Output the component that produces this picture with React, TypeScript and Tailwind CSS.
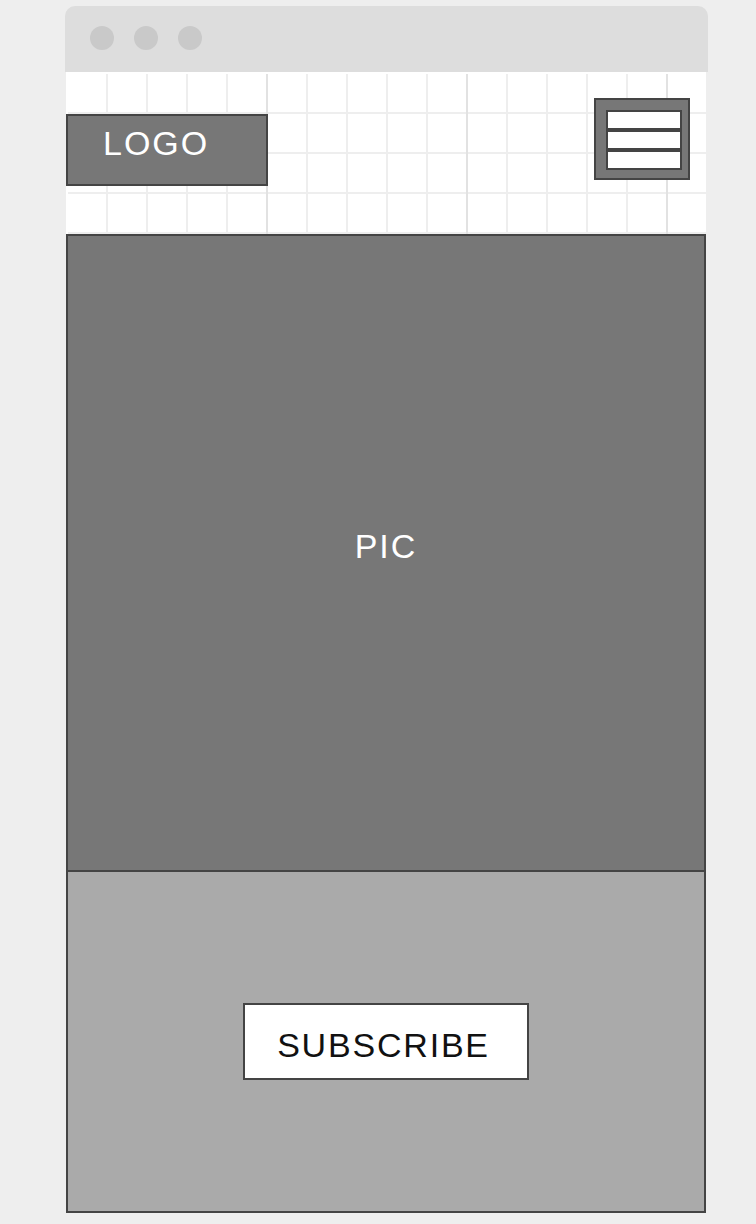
import React from 'react'

const App = () => {
  const dots = [1, 2, 3]
  return (
    <div className="min-h-screen bg-[#eeeeee] pt-[6px] pl-[65px] font-['Liberation_Sans',Arial,sans-serif]">
      <div className="w-[643px]">
        {/* window bar */}
        <div className="h-[66px] rounded-t-[10px] bg-[#dddddd] flex items-start pt-[20px] pl-[25px] gap-[20px]">
          {dots.map((d) => (
            <div key={d} className="w-[24px] h-[24px] rounded-full bg-[#c9c9c9]" />
          ))}
        </div>

        <div className="ml-[1px] w-[640px]">
          {/* header with grid */}
          <div className="h-[162px] border-t-2 border-l-2 border-white bg-white bg-clip-padding [background-image:linear-gradient(to_right,transparent_198px,#e2e2e2_198px),linear-gradient(to_right,transparent_38px,#eeeeee_38px),linear-gradient(to_bottom,transparent_38px,#eeeeee_38px)] [background-size:200px_100%,40px_40px,40px_40px] flex items-start justify-between">
            <div className="-ml-[2px] mt-[40px] w-[202px] h-[72px] border-2 border-[#444444] bg-[#777777] pl-[35px] pt-[10px]">
              <span className="text-white text-[34px] leading-none tracking-[2px]">LOGO</span>
            </div>
            <div className="mt-[24px] mr-[16px] w-[96px] h-[82px] border-2 border-[#444444] bg-[#777777] pl-[10px] pt-[10px]">
              <div className="w-[76px] flex flex-col">
                <div className="h-[20px] border-2 border-[#444444] bg-white" />
                <div className="h-[20px] border-2 border-[#444444] bg-white" />
                <div className="h-[20px] border-2 border-[#444444] bg-white" />
              </div>
            </div>
          </div>

          {/* picture */}
          <div className="h-[638px] border-2 border-[#444444] bg-[#777777] flex items-center justify-center pb-[15px]">
            <span className="text-white text-[34px] leading-none tracking-[2px]">PIC</span>
          </div>

          {/* subscribe */}
          <div className="h-[341px] border-2 border-t-0 border-[#444444] bg-[#aaaaaa] flex items-center justify-center">
            <button className="w-[286px] h-[77px] border-2 border-[#444444] bg-white flex items-center justify-center pt-[6px] pr-[5px]">
              <span className="text-[#111111] text-[34px] leading-none tracking-[1.8px]">SUBSCRIBE</span>
            </button>
          </div>
        </div>
      </div>
    </div>
  )
}

export default App
